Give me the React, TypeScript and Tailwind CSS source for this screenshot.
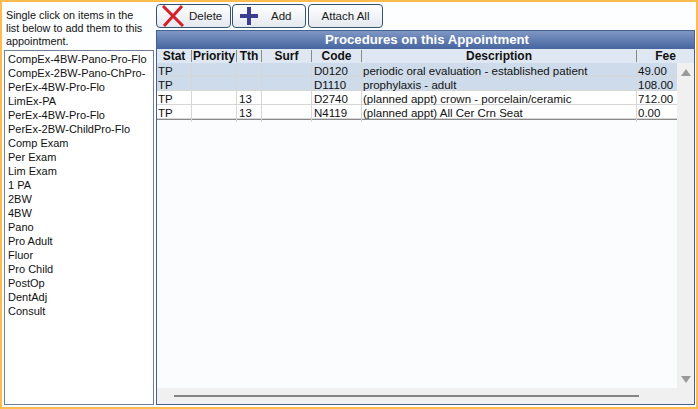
const items = [
  'CompEx-4BW-Pano-Pro-Flo',
  'CompEx-2BW-Pano-ChPro-',
  'PerEx-4BW-Pro-Flo',
  'LimEx-PA',
  'PerEx-4BW-Pro-Flo',
  'PerEx-2BW-ChildPro-Flo',
  'Comp Exam',
  'Per Exam',
  'Lim Exam',
  '1 PA',
  '2BW',
  '4BW',
  'Pano',
  'Pro Adult',
  'Fluor',
  'Pro Child',
  'PostOp',
  'DentAdj',
  'Consult',
];

const rows = [
  { stat: 'TP', tth: '', code: 'D0120', desc: 'periodic oral evaluation - established patient', fee: '49.00', sel: true },
  { stat: 'TP', tth: '', code: 'D1110', desc: 'prophylaxis - adult', fee: '108.00', sel: true },
  { stat: 'TP', tth: '13', code: 'D2740', desc: '(planned appt) crown - porcelain/ceramic', fee: '712.00', sel: false },
  { stat: 'TP', tth: '13', code: 'N4119', desc: '(planned appt) All Cer Crn Seat', fee: '0.00', sel: false },
];

const headers = ['Stat', 'Priority', 'Tth', 'Surf', 'Code', 'Description', 'Fee'];

function ToolButton({ width, children }: { width: string; children: React.ReactNode }) {
  return (
    <button className={`${width} h-[24px] flex items-center rounded-[4px] border border-[#34536f] bg-gradient-to-b from-white to-[#e4e9ef] text-[11.5px] text-[#1a1a1a]`}>
      {children}
    </button>
  );
}

export default function App() {
  return (
    <div className="w-[698px] h-[409px] border-2 border-[#ffbb4d] bg-[#fdfeff] pl-[2px] pr-[1px] pb-[2px] flex gap-[2px] overflow-hidden font-['Liberation_Sans',sans-serif] text-[11.5px] leading-[14px] text-[#111]">
      <div className="w-[150px] flex flex-col">
        <div className="h-[48px] pl-[2px] pr-[8px] pt-[7px] leading-[13px] text-[10.8px]">
          Single click on items in the list below to add them to this appointment.
        </div>
        <div className="flex-1 bg-white border border-[#6f7f9a] pl-[3px] pt-[1px] text-[11px]">
          {items.map((item, i) => (
            <div key={i} className="h-[14px] whitespace-nowrap overflow-hidden">{item}</div>
          ))}
        </div>
      </div>

      <div className="flex-1 flex flex-col">
        <div className="h-[28px] flex gap-[1px] pt-[2px]">
          <ToolButton width="w-[75px]">
            <svg width="24" height="22" viewBox="0 0 24 22" className="ml-[4px] shrink-0">
              <path d="M2 1 L22 21 M21 1 L3 21" stroke="#d3202a" strokeWidth="3" fill="none" />
            </svg>
            <span className="ml-[4px]">Delete</span>
          </ToolButton>
          <ToolButton width="w-[74px]">
            <svg width="20" height="18" viewBox="0 0 20 18" className="ml-[6px] shrink-0">
              <path d="M1 9 H19 M10 0 V18" stroke="#3c3f8f" strokeWidth="4" fill="none" />
            </svg>
            <span className="ml-[12px]">Add</span>
          </ToolButton>
          <ToolButton width="w-[75px] ml-[1px]">
            <span className="w-full text-center">Attach All</span>
          </ToolButton>
        </div>

        <div className="flex-1 flex flex-col border border-[#44618f] bg-[#fbfcfe]">
          <div className="h-[18px] shrink-0 pl-[3px] bg-gradient-to-b from-[#7f97c4] to-[#46659f] text-center text-white font-bold text-[13.2px] leading-[18px]">
            Procedures on this Appointment
          </div>
          <div className="grid grid-cols-[35px_45px_25px_50px_50px_275px_1fr] h-[14px] shrink-0 bg-[#dfe7f2] font-bold text-[12px]">
            {headers.map((h, i) => (
              <div key={h} className={`text-center ${i < 6 ? 'border-r border-[#8a8a8a]' : ''} h-[12px] leading-[12px] mt-[1px]`}>{h}</div>
            ))}
          </div>
          <div className="flex-1 flex min-h-0">
            <div className="w-[520px]">
              {rows.map((r) => (
                <div key={r.code} className={`grid grid-cols-[35px_45px_25px_50px_50px_275px_40px] h-[14px] border-b border-[#d6d6d6] leading-[17px] ${r.sel ? 'bg-[#cddbea]' : 'bg-white'}`}>
                  <div className="pl-[1px] border-r border-[#d6d6d6]">{r.stat}</div>
                  <div className="border-r border-[#d6d6d6]" />
                  <div className="pl-[2px] border-r border-[#d6d6d6]">{r.tth}</div>
                  <div className="border-r border-[#d6d6d6]" />
                  <div className="pl-[2px] border-r border-[#d6d6d6]">{r.code}</div>
                  <div className="pl-[1px] border-r border-[#d6d6d6] whitespace-nowrap">{r.desc}</div>
                  <div className="pl-[1px]">{r.fee}</div>
                </div>
              ))}
              <div className="h-px bg-[#8a8a8a]" />
            </div>
            <div className="flex-1 flex flex-col justify-between items-center pt-[6px] pb-[5px] bg-[#f0f0f0]">
              <div className="w-0 h-0 border-x-[5px] border-x-transparent border-b-[7px] border-b-[#9a9a9a]" />
              <div className="w-0 h-0 border-x-[5px] border-x-transparent border-t-[7px] border-t-[#9a9a9a]" />
            </div>
          </div>
          <div className="h-[16px] shrink-0 flex items-center pl-[17px] bg-[#f0f0f0]">
            <div className="w-[465px] h-[2px] bg-[#858585]" />
          </div>
        </div>
      </div>
    </div>
  );
}
